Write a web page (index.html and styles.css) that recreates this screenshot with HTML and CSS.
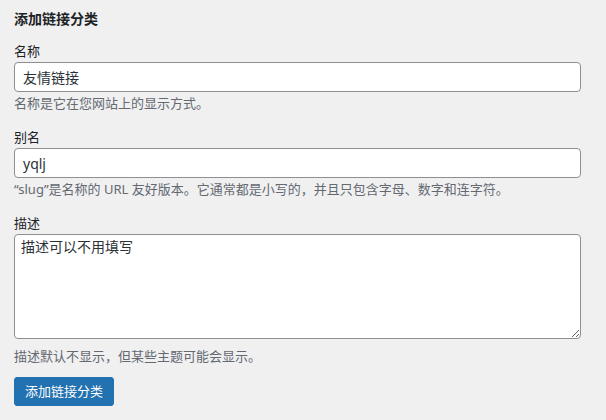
FILE: index.html
```html
<!DOCTYPE html>
<html lang="zh-CN">
<head>
<meta charset="utf-8">
<link rel="stylesheet" href="styles.css">
</head>
<body>
<div class="form-wrap">
  <h2 class="title">添加链接分类</h2>
  <div class="field">
    <label class="label">名称</label>
    <input class="text-input" type="text" value="友情链接">
    <p class="desc">名称是它在您网站上的显示方式。</p>
  </div>
  <div class="field">
    <label class="label">别名</label>
    <input class="text-input" type="text" value="yqlj">
    <p class="desc">“slug”是名称的 URL 友好版本。它通常都是小写的，并且只包含字母、数字和连字符。</p>
  </div>
  <div class="field">
    <label class="label">描述</label>
    <textarea class="text-area">描述可以不用填写</textarea>
    <p class="desc">描述默认不显示，但某些主题可能会显示。</p>
  </div>
  <div class="submit">
    <button class="button" type="button">添加链接分类</button>
  </div>
</div>
</body>
</html>
```
FILE: styles.css
```css
html, body {
  margin: 0;
  padding: 0;
  background: #f0f0f1;
}
body {
  font-family: "Segoe UI", "Noto Sans", "Noto Sans CJK SC", sans-serif;
  color: #1d2327;
  font-size: 13px;
}
.form-wrap {
  padding: 9px 25px 0 14px;
  display: flex;
  flex-direction: column;
}
.title {
  margin: 0;
  font-size: 14px;
  font-weight: 700;
  line-height: 20px;
  height: 20px;
}
.field {
  display: flex;
  flex-direction: column;
}
.field:first-of-type {
  margin-top: 13px;
}
.field + .field {
  margin-top: 16px;
}
.label {
  display: block;
  font-size: 13px;
  line-height: 18px;
  height: 18px;
  margin-bottom: 2px;
}
.text-input {
  box-sizing: border-box;
  width: 567px;
  height: 30px;
  margin: 0;
  padding: 0 8px;
  border: 1px solid #8c8f94;
  border-radius: 4px;
  background: #fff;
  font-family: inherit;
  font-size: 14px;
  color: #2c3338;
}
.text-area {
  box-sizing: border-box;
  display: block;
  width: 567px;
  height: 105px;
  margin: 0 0 6px 0;
  padding: 2px 6px;
  border: 1px solid #8c8f94;
  border-radius: 4px;
  background: #fff;
  font-family: inherit;
  font-size: 14px;
  line-height: 20px;
  color: #2c3338;
  resize: both;
}
.desc {
  margin: 2px 0 0 0;
  font-size: 13px;
  line-height: 18px;
  color: #646970;
}
.submit {
  margin-top: 12px;
}
.button {
  box-sizing: border-box;
  height: 29px;
  width: 100px;
  padding: 0;
  white-space: nowrap;
  border: 1px solid #2271b1;
  border-radius: 3px;
  background: #2271b1;
  color: #fff;
  font-family: inherit;
  font-size: 13px;
  line-height: 27px;
  text-align: center;
}
```
